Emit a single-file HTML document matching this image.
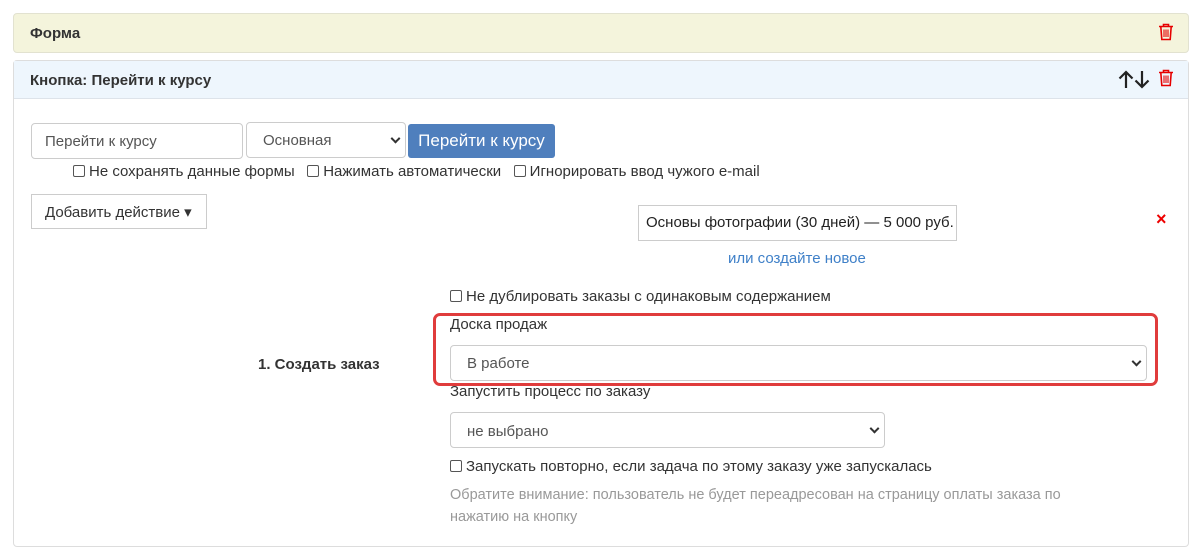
<!DOCTYPE html>
<html><head><meta charset="utf-8"><style>
*{box-sizing:border-box;margin:0;padding:0}
body{width:1200px;height:557px;background:#fff;font-family:"Liberation Sans","Noto Sans CJK SC",sans-serif;font-size:15px;color:#333;position:relative;overflow:hidden}
.a{position:absolute;white-space:nowrap}
.box{position:absolute;border:1px solid #ccc;border-radius:4px;background:#fff}
.cb{display:inline-block;width:12px;height:12px;border:1px solid #555;border-radius:2px;vertical-align:-1px;margin-right:4px;background:#fff}
.chev{position:absolute;right:6px;top:50%;width:7px;height:7px;border-right:2px solid #333;border-bottom:2px solid #333;transform:translateY(-70%) rotate(45deg)}
</style></head><body>
<div class="a" style="left:13px;top:13px;width:1176px;height:40px;background:#f4f4dc;border:1px solid #e2e2d0;border-radius:4px"></div>
<div class="a" style="left:30px;top:25px;font-weight:bold;font-size:15px">Форма</div>
<svg class="a" style="left:1158px;top:23px" width="16" height="18" viewBox="0 0 16 18"><g fill="none" stroke="#e60000" stroke-width="1.6"><path d="M1 3.5h14M5.5 3.5V1.5h5v2M2.8 3.5l1 13h8.4l1-13"/><path d="M6 6.5v7.5M8 6.5v7.5M10 6.5v7.5" stroke-width="1.1"/></g></svg>

<div class="a" style="left:13px;top:60px;width:1176px;height:487px;border:1px solid #ddd;border-radius:4px"></div>
<div class="a" style="left:14px;top:61px;width:1174px;height:38px;background:#eef6fd;border-bottom:1px solid #dde3ea"></div>
<div class="a" style="left:30px;top:72px;font-weight:bold;font-size:15px">Кнопка: Перейти к курсу</div>
<svg class="a" style="left:1118px;top:70px" width="32" height="19" viewBox="0 0 32 19"><g fill="none" stroke="#222" stroke-width="2.2"><path d="M8 18V2M1.5 8.5L8 2l6.5 6.5"/><path d="M24 1v16M17.5 10.5L24 17l6.5-6.5"/></g></svg>
<svg class="a" style="left:1158px;top:69px" width="16" height="18" viewBox="0 0 16 18"><g fill="none" stroke="#e60000" stroke-width="1.6"><path d="M1 3.5h14M5.5 3.5V1.5h5v2M2.8 3.5l1 13h8.4l1-13"/><path d="M6 6.5v7.5M8 6.5v7.5M10 6.5v7.5" stroke-width="1.1"/></g></svg>

<div class="box" style="left:31px;top:123px;width:212px;height:36px"></div>
<div class="a" style="left:45px;top:133px;color:#555">Перейти к курсу</div>
<div class="box" style="left:246px;top:122px;width:160px;height:36px"><div class="chev"></div></div>
<div class="a" style="left:263px;top:132px;color:#555">Основная</div>
<div class="a" style="left:408px;top:124px;width:147px;height:34px;background:#4f7fbd;border-radius:3px;color:#fff;font-size:17px;text-align:center;line-height:34px">Перейти к курсу</div>
<div class="a" style="left:73px;top:163px;font-size:15px"><span class="cb"></span>Не сохранять данные формы&nbsp;&nbsp;&nbsp;<span class="cb"></span>Нажимать автоматически&nbsp;&nbsp;&nbsp;<span class="cb"></span>Игнорировать ввод чужого e-mail</div>
<div class="a" style="left:31px;top:194px;width:176px;height:35px;border:1px solid #ccc;background:#fff"></div>
<div class="a" style="left:45px;top:203px">Добавить действие ▾</div>

<div class="a" style="left:638px;top:205px;width:319px;height:36px;border:1px solid #ccc"></div>
<div class="a" style="left:646px;top:214px;color:#222">Основы фотографии (30 дней) — 5 000 руб.</div>
<div class="a" style="left:1156px;top:209px;color:#e00;font-size:18px;font-weight:bold">×</div>
<div class="a" style="left:728px;top:250px;color:#3f80c8">или создайте новое</div>

<div class="a" style="left:450px;top:288px"><span class="cb"></span>Не дублировать заказы с одинаковым содержанием</div>
<div class="a" style="left:433px;top:313px;width:725px;height:73px;border:3px solid #e03c3c;border-radius:7px"></div>
<div class="a" style="left:450px;top:316px">Доска продаж</div>
<div class="box" style="left:450px;top:345px;width:697px;height:36px"><div class="chev"></div></div>
<div class="a" style="left:467px;top:355px;color:#555">В работе</div>
<div class="a" style="left:258px;top:356px;font-weight:bold">1. Создать заказ</div>
<div class="a" style="left:450px;top:383px">Запустить процесс по заказу</div>
<div class="box" style="left:450px;top:412px;width:435px;height:36px"><div class="chev"></div></div>
<div class="a" style="left:467px;top:423px;color:#555">не выбрано</div>
<div class="a" style="left:450px;top:458px"><span class="cb"></span>Запускать повторно, если задача по этому заказу уже запускалась</div>
<div class="a" style="left:450px;top:484px;color:#999;font-size:14.5px;line-height:22px">Обратите внимание: пользователь не будет переадресован на страницу оплаты заказа по<br>нажатию на кнопку</div>
</body></html>
